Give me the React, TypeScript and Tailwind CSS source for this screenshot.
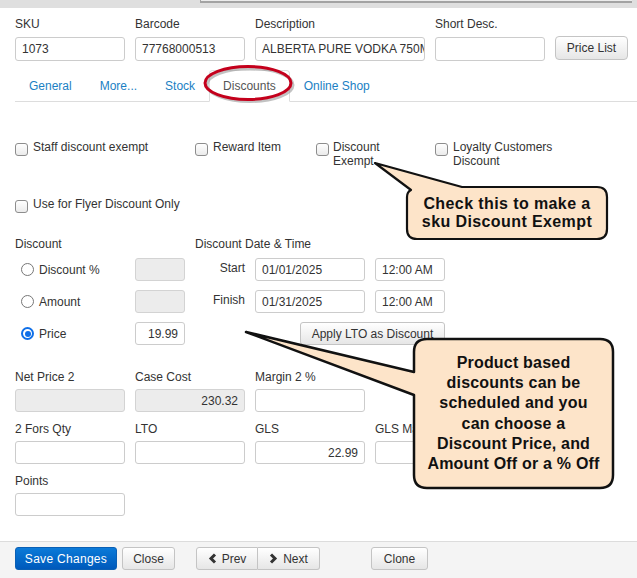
import React from 'react';

const Field: React.FC<{ value?: string; disabled?: boolean; right?: boolean; className?: string }> = ({
  value = '',
  disabled,
  right,
  className = '',
}) => (
  <div
    className={`h-[23px] border rounded-[3px] px-[6px] flex items-center whitespace-nowrap overflow-hidden text-[12px] text-[#333] ${
      disabled ? 'bg-[#ececec] border-[#d3d3d3]' : 'bg-white border-[#cccccc]'
    } ${right ? 'justify-end' : ''} ${className}`}
  >
    {value}
  </div>
);

const Check: React.FC = () => (
  <span className="inline-block shrink-0 w-[13px] h-[13px] rounded-[3px] border border-[#8d8d8d] bg-linear-to-b from-white to-[#ebebeb]" />
);

const Radio: React.FC<{ checked?: boolean }> = ({ checked }) =>
  checked ? (
    <span className="shrink-0 w-[13px] h-[13px] rounded-full border-2 border-[#0f6fe8] bg-white flex items-center justify-center">
      <span className="w-[6px] h-[6px] rounded-full bg-[#0f6fe8]" />
    </span>
  ) : (
    <span className="shrink-0 w-[13px] h-[13px] rounded-full border border-[#777] bg-white" />
  );

const Btn: React.FC<{ children: React.ReactNode; className?: string }> = ({ children, className = '' }) => (
  <div
    className={`h-[23px] shrink-0 flex items-center justify-center border border-[#c4c4c4] rounded-[3px] bg-linear-to-b from-white to-[#e6e6e6] text-[12px] text-[#333] ${className}`}
  >
    {children}
  </div>
);

const Labeled: React.FC<{ label: string; children: React.ReactNode; w?: string }> = ({ label, children, w = 'w-[110px]' }) => (
  <div className={`flex flex-col shrink-0 ${w}`}>
    <div className="h-[14px] leading-[14px] mb-[5px] whitespace-nowrap overflow-hidden">{label}</div>
    {children}
  </div>
);

const Chevron: React.FC<{ dir: 'left' | 'right' }> = ({ dir }) => (
  <svg width="9" height="11" viewBox="0 0 9 11" className="mr-[5px]">
    <polyline
      points={dir === 'left' ? '7,1.5 3,5.5 7,9.5' : '2,1.5 6,5.5 2,9.5'}
      fill="none"
      stroke="#333"
      strokeWidth="3"
    />
  </svg>
);

export default function App() {
  const tabs = ['General', 'More...', 'Stock', 'Discounts', 'Online Shop'];

  return (
    <div
      className="relative w-[637px] h-[578px] overflow-hidden bg-white flex flex-col text-[12px] text-[#333]"
      style={{ fontFamily: '"Liberation Sans", Arial, sans-serif' }}
    >
      {/* window strip above */}
      <div className="h-[8px] bg-[#dfdfdf] flex">
        <div className="ml-[200px] w-[432px] h-[3px] bg-[#ececec] border-b-2 border-l border-[#a3a3a3]" />
      </div>

      {/* header fields */}
      <div className="flex items-end gap-[10px] pl-[15px] pt-[9px]">
        <div className="flex flex-col w-[110px] shrink-0">
          <div className="h-[14px] leading-[14px] mb-[6px]">SKU</div>
          <Field value="1073" className="h-[24px]" />
        </div>
        <div className="flex flex-col w-[110px] shrink-0">
          <div className="h-[14px] leading-[14px] mb-[6px]">Barcode</div>
          <Field value="77768000513" className="h-[24px]" />
        </div>
        <div className="flex flex-col w-[170px] shrink-0">
          <div className="h-[14px] leading-[14px] mb-[6px]">Description</div>
          <Field value="ALBERTA PURE VODKA 750ML" className="h-[24px]" />
        </div>
        <div className="flex flex-col w-[110px] shrink-0">
          <div className="h-[14px] leading-[14px] mb-[6px]">Short Desc.</div>
          <Field className="h-[24px]" />
        </div>
        <Btn className="w-[73px] h-[24px] mb-[1px] rounded-[4px]">Price List</Btn>
      </div>

      {/* tabs */}
      <div className="mt-[9px] ml-[15px] flex border-b border-[#dddddd] h-[32px]">
        {tabs.map((t) => (
          <div
            key={t}
            className={`h-[32px] -mb-px px-[13px] flex items-center border rounded-t-[4px] ${
              t === 'Discounts'
                ? 'border-[#dddddd] border-b-white bg-white text-[#555]'
                : 'border-transparent text-[#1b7fc4]'
            }`}
          >
            {t}
          </div>
        ))}
      </div>

      {/* checkboxes */}
      <div className="flex items-start pl-[15px] pt-[38px] leading-[14px]">
        <div className="w-[180px] flex items-start gap-[5px]">
          <span className="mt-[3px]"><Check /></span>
          <span>Staff discount exempt</span>
        </div>
        <div className="w-[121px] flex items-start gap-[5px]">
          <span className="mt-[3px]"><Check /></span>
          <span>Reward Item</span>
        </div>
        <div className="w-[119px] flex items-start gap-[4px]">
          <span className="mt-[3px]"><Check /></span>
          <span className="w-[60px]">Discount Exempt</span>
        </div>
        <div className="flex items-start gap-[5px]">
          <span className="mt-[3px]"><Check /></span>
          <span className="w-[110px]">Loyalty Customers Discount</span>
        </div>
      </div>

      <div className="flex items-start gap-[5px] pl-[15px] mt-[29px] leading-[14px]">
        <span className="mt-[3px]"><Check /></span>
        <span>Use for Flyer Discount Only</span>
      </div>

      {/* discount */}
      <div className="flex pl-[15px] mt-[21px]">
        <div className="w-[180px] flex flex-col">
          <div className="h-[14px] leading-[14px] mb-[7px]">Discount</div>
          <div className="flex flex-col gap-[9px]">
            {[
              { l: 'Discount %', v: '', d: true, c: false },
              { l: 'Amount', v: '', d: true, c: false },
              { l: 'Price', v: '19.99', d: false, c: true },
            ].map((r) => (
              <div key={r.l} className="flex items-center h-[23px]">
                <div className="w-[120px] pl-[6px] flex items-center gap-[5px]">
                  <Radio checked={r.c} />
                  <span>{r.l}</span>
                </div>
                <Field value={r.v} disabled={r.d} right className="w-[50px]" />
              </div>
            ))}
          </div>
        </div>
        <div className="flex flex-col">
          <div className="h-[14px] leading-[14px] mb-[7px]">Discount Date &amp; Time</div>
          <div className="flex flex-col gap-[9px]">
            <div className="flex items-center h-[23px]">
              <span className="w-[50px] text-right pb-[3px]">Start</span>
              <Field value="01/01/2025" className="ml-[10px] w-[110px]" />
              <Field value="12:00 AM" className="ml-[10px] w-[70px]" />
            </div>
            <div className="flex items-center h-[23px]">
              <span className="w-[50px] text-right pb-[3px]">Finish</span>
              <Field value="01/31/2025" className="ml-[10px] w-[110px]" />
              <Field value="12:00 AM" className="ml-[10px] w-[70px]" />
            </div>
            <div className="flex items-center h-[23px]">
              <Btn className="ml-[105px] w-[145px]">Apply LTO as Discount</Btn>
            </div>
          </div>
        </div>
      </div>

      {/* price grid */}
      <div className="flex flex-col gap-[10px] pl-[15px] mt-[25px]">
        <div className="flex gap-[10px]">
          <Labeled label="Net Price 2"><Field disabled /></Labeled>
          <Labeled label="Case Cost"><Field value="230.32" disabled right /></Labeled>
          <Labeled label="Margin 2 %"><Field /></Labeled>
        </div>
        <div className="flex gap-[10px]">
          <Labeled label="2 Fors Qty"><Field /></Labeled>
          <Labeled label="LTO"><Field /></Labeled>
          <Labeled label="GLS"><Field value="22.99" right /></Labeled>
          <Labeled label="GLS Margin %"><Field /></Labeled>
        </div>
        <div className="flex gap-[10px]">
          <Labeled label="Points"><Field /></Labeled>
        </div>
      </div>

      {/* footer */}
      <div className="mt-auto h-[37px] border-t border-[#dcdcdc] bg-[#f4f4f4] flex items-start pt-[5px] pl-[15px]">
        <div className="h-[23px] w-[102px] shrink-0 flex items-center justify-center rounded-[3px] border border-[#0a5fb4] bg-linear-to-b from-[#0c7ad8] to-[#0059bb] text-white tracking-[0.3px]">
          Save Changes
        </div>
        <Btn className="ml-[5px] w-[53px]">Close</Btn>
        <div className="ml-[21px] flex">
          <Btn className="w-[62px] rounded-r-none">
            <Chevron dir="left" />
            Prev
          </Btn>
          <Btn className="w-[62px] rounded-l-none border-l-0">
            <Chevron dir="right" />
            Next
          </Btn>
        </div>
        <Btn className="ml-[51px] w-[57px]">Clone</Btn>
      </div>

      {/* annotations */}
      <svg className="absolute inset-0 pointer-events-none" width="637" height="578" viewBox="0 0 637 578">
        <ellipse cx="250" cy="85" rx="43" ry="16.5" fill="none" stroke="#9a9a9a" strokeOpacity="0.6" strokeWidth="3" />
        <ellipse cx="248" cy="83" rx="43" ry="16.5" fill="none" stroke="#c4001c" strokeWidth="3" />
        <path
          d="M375,163 L462,187 L597,187 Q607,187 607,197 L607,229 Q607,239 597,239 L417,239 Q407,239 407,229 L407,197 Q407,192 411,190 Z"
          fill="#fde4c9"
          stroke="#111"
          strokeWidth="2.2"
          strokeLinejoin="round"
        />
        <path
          d="M246,332 L414,372 L414,352 Q414,339 427,339 L600,339 Q613,339 613,352 L613,475 Q613,488 600,488 L427,488 Q414,488 414,475 L414,395 Z"
          fill="#fde4c9"
          stroke="#111"
          strokeWidth="2.5"
          strokeLinejoin="round"
        />
      </svg>
      <div className="absolute left-[407px] top-[187px] w-[200px] h-[52px] flex items-center justify-center text-center font-bold text-[16px] leading-[18px] text-[#111] tracking-[0.4px]">
        Check this to make a<br />sku Discount Exempt
      </div>
      <div className="absolute left-[414px] top-[339px] w-[199px] h-[149px] flex items-center justify-center text-center font-bold text-[16px] leading-[20.3px] text-[#111] tracking-[0.2px]">
        Product based
        <br />
        discounts can be
        <br />
        scheduled and you
        <br />
        can choose a
        <br />
        Discount Price, and
        <br />
        Amount Off or a % Off
      </div>
    </div>
  );
}
